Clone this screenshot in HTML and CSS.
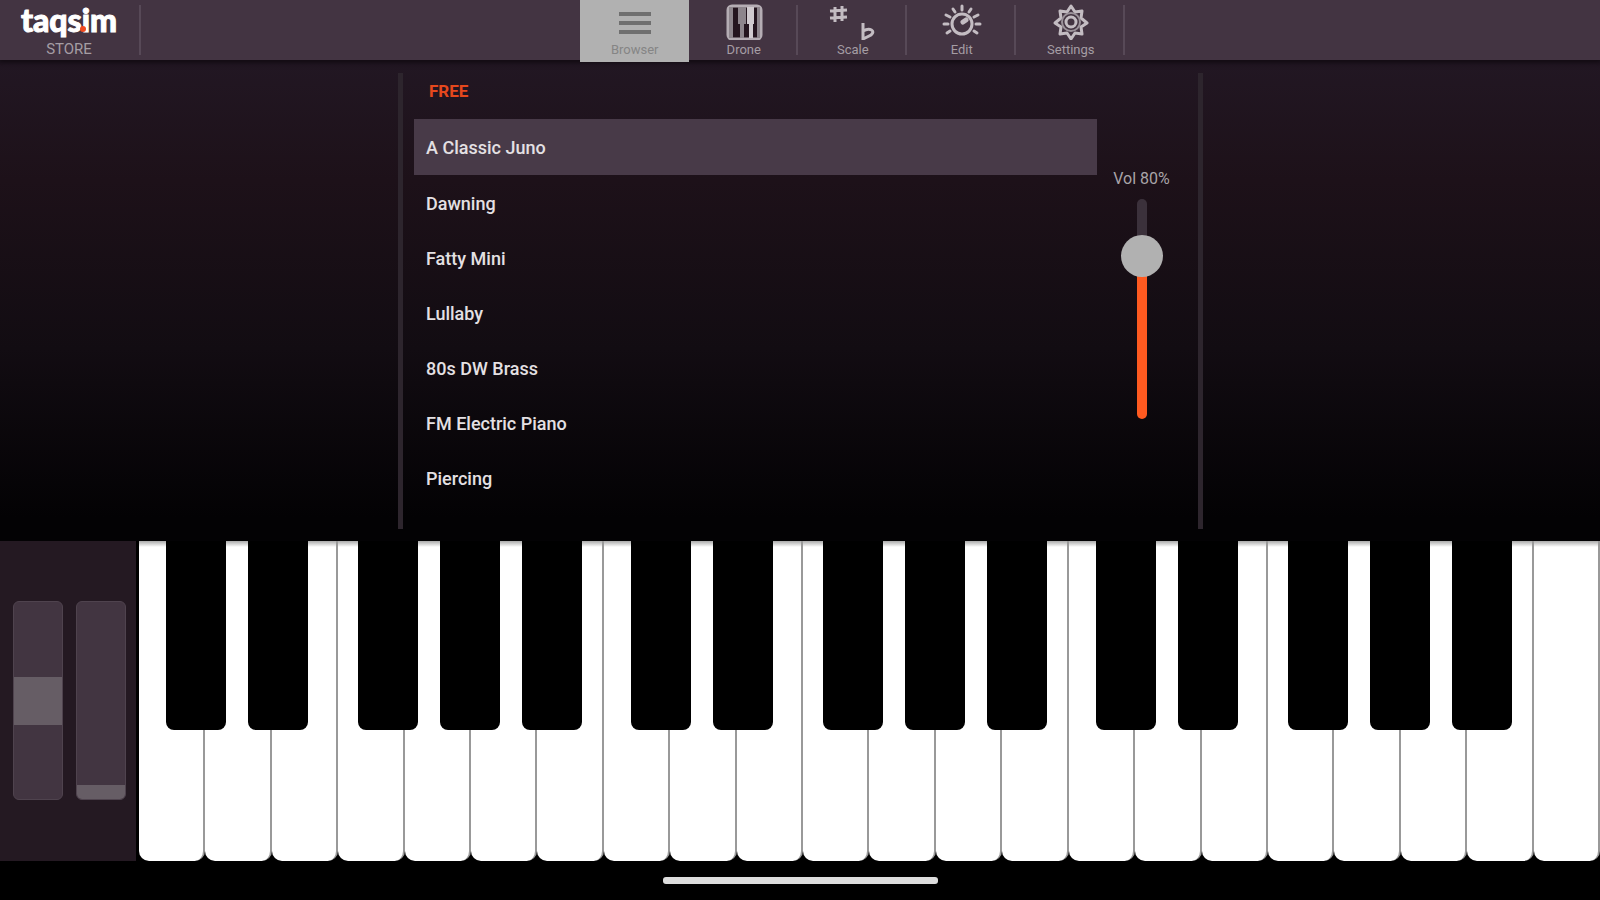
FILE: index.html
```
<!DOCTYPE html>
<html lang="en">
<head>
<meta charset="utf-8">
<meta name="viewport" content="width=device-width, initial-scale=1.0">
<title>taqsim</title>
<link rel="stylesheet" href="styles.css">
</head>
<body>
<header>
  <a class="brand" href="#store">
    <span class="logo">taqs<i class="logo-dot"></i>im</span>
    <span class="store">STORE</span>
  </a>
  <nav>
    <button class="tab active">
      <svg width="40" height="40" viewBox="0 0 40 40" stroke="#6f6f6f" stroke-width="4">
        <path d="M4 14h32M4 23h32M4 32h32"/>
      </svg>
      Browser
    </button>
    <button class="tab">
      <svg width="40" height="40" viewBox="0 0 40 40">
        <rect x="4" y="6" width="33" height="33" rx="4" fill="#24151f" stroke="#b5adb4" stroke-width="3"/>
        <path d="M5 7h4v31h-4zM33 7h3v31h-3z" fill="#8d858c"/>
        <path d="M14 7h8v17h-2v14h-4v-14h-2z" fill="#8d858c"/>
        <path d="M23 7h7v17h-1v14h-4v-14h-2z" fill="#d0cacf"/>
      </svg>
      Drone
    </button>
    <button class="tab">
      <svg width="48" height="40" viewBox="0 0 48 40" fill="none" stroke="#c3bcc2" stroke-width="3">
        <path d="M6 7v15M13 6v15M1 11l17-1M1 18l17-1"/>
        <path d="M34 23v16l8-4c5-4-1-8-8-4"/>
      </svg>
      Scale
    </button>
    <button class="tab">
      <svg width="40" height="40" viewBox="0 0 40 40" fill="none" stroke="#c3bcc2" stroke-width="3" stroke-linecap="round">
        <circle cx="20" cy="24" r="10"/>
        <path d="M21 22l3-2" stroke-width="5"/>
        <path d="M20 6v4M11 9l2 3M29 9l-2 3M4 15l4 2M36 15l-4 2M2 24h4M38 24h-4M5 33l3-2M35 33l-3-2"/>
      </svg>
      Edit
    </button>
    <button class="tab">
      <svg width="40" height="40" viewBox="0 0 40 40" fill="none" stroke="#c3bcc2" stroke-width="3" stroke-linejoin="round">
        <path d="M20 6l4 6 7-1-1 7 6 5-6 4 1 7-7-1-4 6-4-6-7 1 1-7-6-4 6-5-1-7 7 1z"/>
        <circle cx="20" cy="22" r="9" stroke="#9b929a" stroke-width="2"/>
        <circle cx="20" cy="22" r="5"/>
      </svg>
      Settings
    </button>
  </nav>
</header>

<main>
  <section class="browser">
    <div class="presets">
      <h2>FREE</h2>
      <ul>
        <li><button class="preset selected">A Classic Juno</button></li>
        <li><button class="preset">Dawning</button></li>
        <li><button class="preset">Fatty Mini</button></li>
        <li><button class="preset">Lullaby</button></li>
        <li><button class="preset">80s DW Brass</button></li>
        <li><button class="preset">FM Electric Piano</button></li>
        <li><button class="preset">Piercing</button></li>
      </ul>
    </div>
    <div class="volume">
      <label for="volume">Vol 80%</label>
      <input id="volume" type="range" min="0" max="100" value="80">
    </div>
  </section>
</main>

<section class="keyboard">
  <div class="wheels">
    <input class="wheel pitch" type="range" min="-50" max="50" value="0" aria-label="Pitch bend">
    <input class="wheel mod" type="range" min="0" max="100" value="0" aria-label="Modulation">
  </div>
  <div class="keys">
    <div class="white-keys" id="whiteKeys"></div>
    <div class="black-keys" id="blackKeys"></div>
  </div>
</section>

<footer><div class="home-bar"></div></footer>

<script>
  const whiteNotes = ["C", "D", "E", "F", "G", "A", "B"];
  const blackNotes = ["C#", "D#", "F#", "G#", "A#"];
  const whiteKeys = document.getElementById("whiteKeys");
  const blackKeys = document.getElementById("blackKeys");

  function addKey(parent, note) {
    const key = document.createElement("button");
    key.className = "key";
    key.setAttribute("aria-label", note);
    parent.appendChild(key);
  }

  // three octaves plus the closing C
  for (let i = 0; i < 22; i++) {
    addKey(whiteKeys, whiteNotes[i % 7] + (3 + Math.floor(i / 7)));
  }

  for (let o = 3; o < 6; o++) {
    const octave = document.createElement("div");
    octave.className = "octave";
    blackNotes.forEach(n => addKey(octave, n + o));
    blackKeys.appendChild(octave);
  }
</script>
</body>
</html>
```
FILE: styles.css
```
* {
  box-sizing: border-box;
}

body {
  font-family: Roboto, sans-serif;
  margin: 0;
  height: 100vh;
  display: flex;
  flex-direction: column;
  background: #000;
  color: #e4e0e3;
}

button {
  font-family: inherit;
  border: none;
  padding: 0;
  background: none;
  cursor: pointer;
}

header {
  display: grid;
  grid-template-columns: 11fr auto 9fr;
  height: 60px;
  background: #433442;
  position: relative;
  box-shadow: 0 1px 5px 2px #120b12;
}

.brand,
.tab {
  background: linear-gradient(#574957, #574957) right 5px / 2px 50px no-repeat;
}

.brand {
  width: 141px;
  padding-right: 3px;
  display: flex;
  flex-direction: column;
  align-items: center;
  text-decoration: none;
}

.logo {
  font-family: Lato, sans-serif;
  font-weight: 900;
  font-size: 32px;
  line-height: 40px;
  color: #fff;
  -webkit-text-stroke: 1px #fff;
  position: relative;
}

.logo-dot {
  position: absolute;
  top: 26px;
  margin-left: -2px;
  width: 6px;
  height: 6px;
  border-radius: 50%;
  background: #f04a20;
}

.store {
  font-size: 15px;
  line-height: 18px;
  color: #a59da4;
}

nav {
  display: flex;
}

.tab {
  width: 109px;
  height: 60px;
  display: flex;
  flex-direction: column;
  align-items: center;
  font-size: 13px;
  line-height: 20px;
  color: #a59da4;
}

.tab.active {
  height: 62px;
  background: #b1b1b1;
  color: #858585;
}

.tab svg {
  flex: none;
}

main {
  flex: 3 0 0;
  display: grid;
  grid-template-columns: 1fr 2fr 1fr;
  background: linear-gradient(#221723, #1d1119 25%, #120c12 60%, #030204 95%);
}

.browser {
  grid-column: 2;
  display: flex;
  margin: 13px -3px 12px -2px;
  border: solid #2d252d;
  border-width: 0 5px;
}

.presets {
  flex: 1;
  padding-left: 11px;
}

h2 {
  margin: 0 0 10px;
  padding: 0 15px;
  font-size: 17px;
  font-weight: 700;
  line-height: 36px;
  color: #e5481d;
}

ul {
  list-style: none;
  margin: 0;
  padding: 0;
}

.preset {
  display: block;
  width: 100%;
  height: 55px;
  padding: 1px 12px 0;
  text-align: left;
  font-size: 18px;
  font-weight: 500;
  color: #e4e0e3;
}

.preset.selected {
  height: 56px;
  background: #483a48;
}

.volume {
  width: 101px;
  padding-right: 12px;
  padding-top: 96px;
  display: flex;
  flex-direction: column;
  align-items: center;
}

.volume label {
  font-size: 16px;
  line-height: 20px;
  color: #a9a4a8;
}

input[type="range"] {
  appearance: none;
  margin: 0;
  background: none;
  writing-mode: vertical-lr;
  direction: rtl;
}

#volume {
  width: 42px;
  height: 220px;
  margin-top: 10px;
}

#volume::-webkit-slider-runnable-track {
  width: 10px;
  border-radius: 5px;
  background: linear-gradient(#3b313b 20%, #ff5a20 20%);
}

#volume::-webkit-slider-thumb {
  appearance: none;
  width: 42px;
  height: 42px;
  margin-left: -16px;
  border-radius: 50%;
  background: #b1b1b1;
}

.keyboard {
  flex: 2 0 0;
  min-height: 0;
  display: flex;
}

.wheels {
  width: 139px;
  padding-left: 13px;
  display: flex;
  align-items: center;
  gap: 13px;
  background: #241922;
  border-right: 3px solid #000;
}

.wheel {
  width: 50px;
  height: 62%;
  border-radius: 6px;
  overflow: hidden;
}

input.wheel {
  background: #423541;
  border: 1px solid #4f434e;
}

.wheel::-webkit-slider-thumb {
  appearance: none;
  width: 50px;
  height: 48px;
  background: #665d65;
}

.mod::-webkit-slider-thumb {
  height: 14px;
}

.keys {
  flex: 1;
  position: relative;
}

.white-keys {
  display: flex;
  height: 100%;
}

.white-keys .key {
  flex: 1;
  background: linear-gradient(#aaa, #fff 6px);
  border-right: 2px solid #999;
  border-radius: 0 0 10px 10px;
}

/* lies over the white keys, stops before the last C */
.black-keys {
  position: absolute;
  top: 0;
  left: 0;
  width: calc(100% * 21 / 22);
  height: 59%;
  display: flex;
}

.octave {
  flex: 1;
  display: grid;
  grid-template-columns: 27fr 60fr 22fr 60fr 50fr 60fr 22fr 60fr 22fr 60fr 22fr;
}

.octave .key {
  background: #000;
  border-radius: 0 0 8px 8px;
}

.octave .key:nth-child(1) { grid-column: 2; }
.octave .key:nth-child(2) { grid-column: 4; }
.octave .key:nth-child(3) { grid-column: 6; }
.octave .key:nth-child(4) { grid-column: 8; }
.octave .key:nth-child(5) { grid-column: 10; }

footer {
  height: 39px;
  display: flex;
  justify-content: center;
  align-items: center;
}

.home-bar {
  width: 275px;
  height: 7px;
  border-radius: 3px;
  background: #ddd;
}
```
